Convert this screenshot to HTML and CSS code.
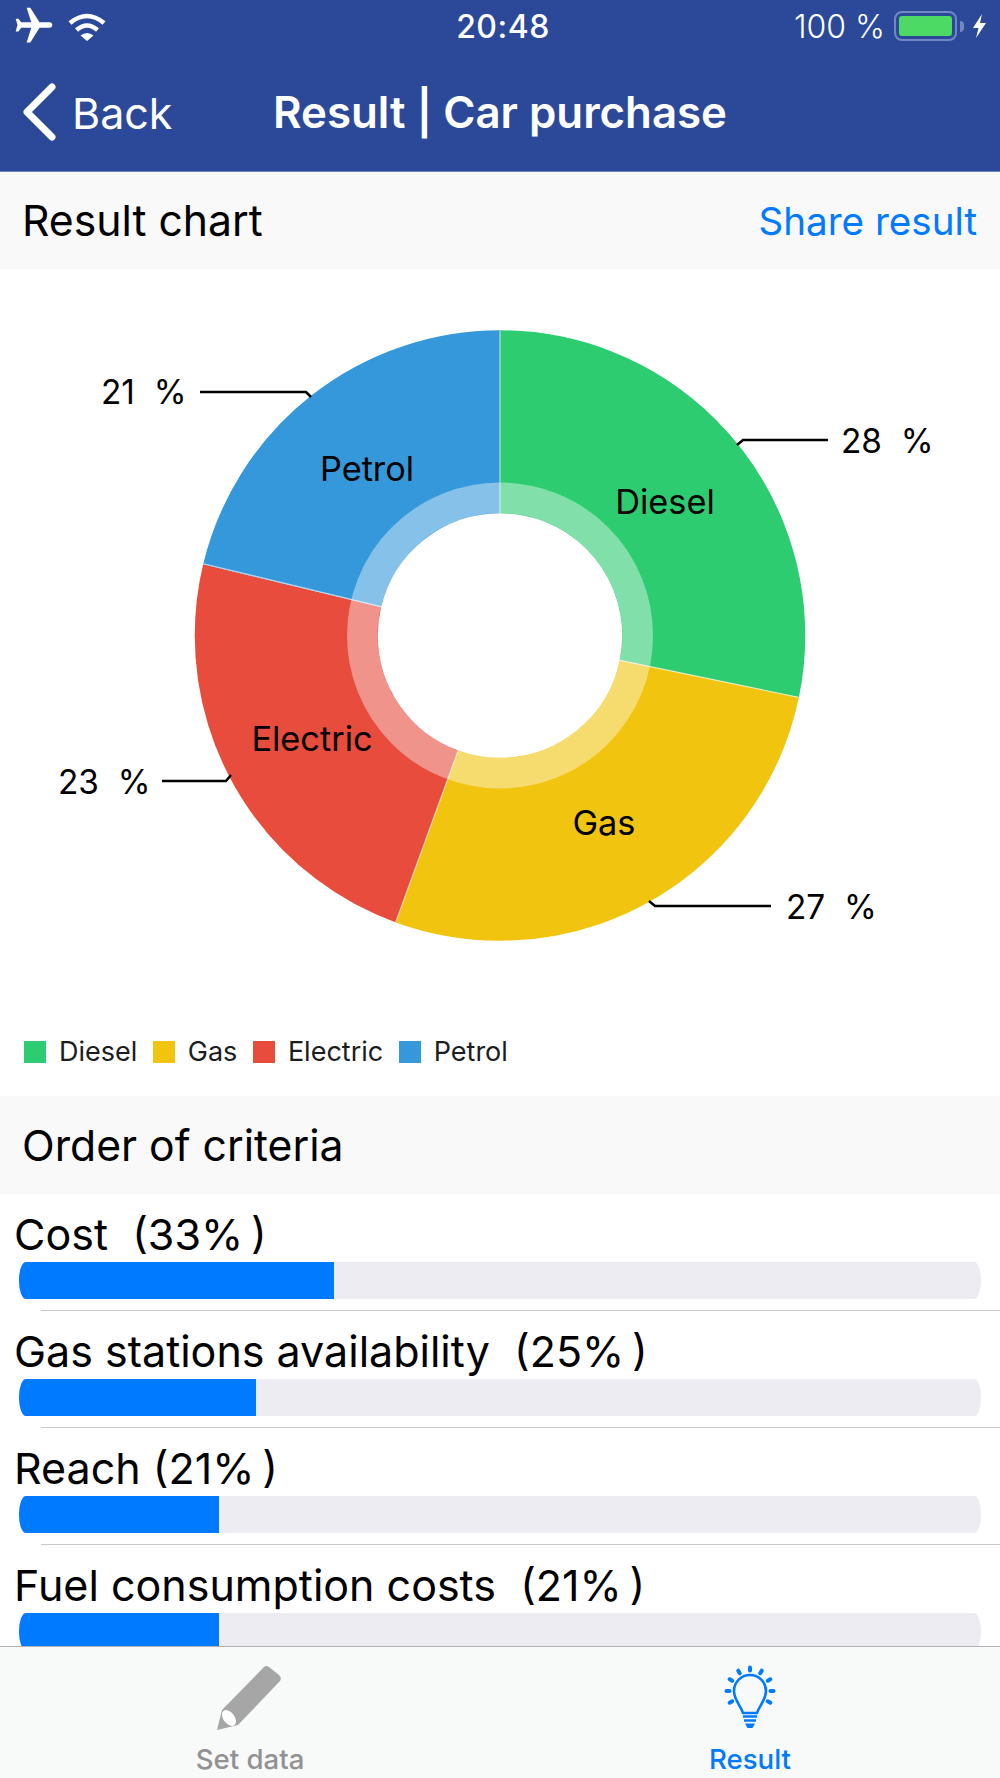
FILE: index.html
```html
<!DOCTYPE html>
<html lang="en">
<head>
    <meta charset="UTF-8">
    <title>Result | Car purchase</title>
    <link rel="stylesheet" href="styles.css">
</head>
<body>
    <div class="app">
        <header class="topbar">
            <div class="status">
                <div class="status-left">
                    <svg class="plane" viewBox="0 0 24 24"><path transform="rotate(90 12 12)" d="M21 16v-2l-8-5V3.5c0-.83-.67-1.5-1.5-1.5S10 2.67 10 3.5V9l-8 5v2l8-2.5V19l-2 1.5V22l3.5-1 3.5 1v-1.5L13 19v-5.5l8 2.5z"/></svg>
                    <svg class="wifi" viewBox="0 0 38 29">
                        <path class="wifi-arc" d="M2 11Q19-3 36 11"/>
                        <path class="wifi-arc" d="M8.5 18Q19 9 29.5 18"/>
                        <path d="M12.5 23.500Q19 18.500 25.500 23.500L19 29Z"/>
                    </svg>
                </div>
                <div class="clock">20:48</div>
                <div class="status-right">
                    <span class="percent">100 %</span>
                    <div class="battery"><div class="battery-level"></div></div>
                    <div class="battery-nub"></div>
                    <svg class="bolt" viewBox="0 0 15 24"><path d="M10 0L1 14H6.500L4 24L14 9H8Z"/></svg>
                </div>
            </div>
            <nav class="navbar">
                <a class="back">
                    <svg class="chevron" viewBox="0 0 36 58"><path d="M30 4L5 29L30 54"/></svg>
                    <span>Back</span>
                </a>
                <div class="title">Result | Car purchase</div>
                <div></div>
            </nav>
        </header>

        <main class="content">
            <div class="section-head">
                <span>Result chart</span>
                <a class="share">Share result</a>
            </div>

            <section class="chart">
                <svg class="donut" viewBox="0 269 1000 750">
                    <g class="ring" transform="rotate(-90 500 635.5)">
                        <circle class="slice green" cx="500" cy="635.5" r="213.75" pathLength="100" stroke-dasharray="28.25 71.75"/>
                        <circle class="slice yellow" cx="500" cy="635.5" r="213.75" pathLength="100" stroke-dasharray="27.3 72.7" stroke-dashoffset="-28.25"/>
                        <circle class="slice red" cx="500" cy="635.5" r="213.75" pathLength="100" stroke-dasharray="23.2 76.8" stroke-dashoffset="-55.55"/>
                        <circle class="slice blue" cx="500" cy="635.5" r="213.75" pathLength="100" stroke-dasharray="21.25 78.75" stroke-dashoffset="-78.75"/>
                        <circle class="shade" cx="500" cy="635.5" r="137.75"/>
                    </g>
                    <line class="gap" x1="500" y1="513" x2="500" y2="330.5"/>
                    <line class="gap" x1="500" y1="513" x2="500" y2="330.5" transform="rotate(101.7 500 635.5)"/>
                    <line class="gap" x1="500" y1="513" x2="500" y2="330.5" transform="rotate(200 500 635.5)"/>
                    <line class="gap" x1="500" y1="513" x2="500" y2="330.5" transform="rotate(283.6 500 635.5)"/>

                    <path class="leader" d="M200 392H306L311 397"/>
                    <path class="leader" d="M828 440H743L737 445"/>
                    <path class="leader" d="M771 906H655L649 901"/>
                    <path class="leader" d="M162 781H226L231 775"/>

                    <text class="value" x="101" y="404">21&#160;&#160;%</text>
                    <text class="value" x="841" y="453">28&#160;&#160;%</text>
                    <text class="value" x="786" y="919">27&#160;&#160;%</text>
                    <text class="value" x="58" y="794">23&#160;&#160;%</text>

                    <text class="name" x="367" y="481">Petrol</text>
                    <text class="name" x="665" y="514">Diesel</text>
                    <text class="name" x="312" y="751">Electric</text>
                    <text class="name" x="604" y="835">Gas</text>
                </svg>
                <div class="legend">
                    <div class="legend-item"><i class="swatch bg-green"></i>Diesel</div>
                    <div class="legend-item"><i class="swatch bg-yellow"></i>Gas</div>
                    <div class="legend-item"><i class="swatch bg-red"></i>Electric</div>
                    <div class="legend-item"><i class="swatch bg-blue"></i>Petrol</div>
                </div>
            </section>

            <div class="section-head">
                <span>Order of criteria</span>
            </div>

            <div class="criteria">
                <div class="row">
                    <div class="row-label">Cost&#160; (33%&#8201;)</div>
                    <div class="track"><div class="fill" style="width: 32.7%"></div></div>
                </div>
                <div class="row">
                    <div class="row-label">Gas stations availability&#160; (25%&#8201;)</div>
                    <div class="track"><div class="fill" style="width: 24.6%"></div></div>
                </div>
                <div class="row">
                    <div class="row-label">Reach (21%&#8201;)</div>
                    <div class="track"><div class="fill" style="width: 20.8%"></div></div>
                </div>
                <div class="row">
                    <div class="row-label">Fuel consumption costs&#160; (21%&#8201;)</div>
                    <div class="track"><div class="fill" style="width: 20.8%"></div></div>
                </div>
            </div>
        </main>

        <footer class="tabbar">
            <a class="tab">
                <svg class="tab-icon" viewBox="0 0 68 68">
                    <path class="pencil" d="M1 66L6 46L48 3Q50 1 53 3L63 11Q66 14 64 17L22 61Z"/>
                    <ellipse class="pencil-tip" cx="13" cy="54" rx="5.500" ry="9" transform="rotate(-38 13 54)"/>
                </svg>
                <span>Set data</span>
            </a>
            <a class="tab active">
                <svg class="tab-icon" viewBox="0 0 68 68">
                    <g class="bulb">
                        <path d="M27 49C25 42 18 36 18 27A16 16 0 0 1 50 27C50 36 43 42 41 49Z"/>
                        <path d="M27 52.500H41M28 56.500H40"/>
                    </g>
                    <path class="bulb-foot" d="M29 59.500H39L36.500 64H31.500Z"/>
                    <g class="rays">
                        <line x1="34" y1="3.500" x2="34" y2="6.500"/>
                        <line x1="34" y1="3.500" x2="34" y2="6.500" transform="rotate(30 34 27)"/>
                        <line x1="34" y1="3.500" x2="34" y2="6.500" transform="rotate(60 34 27)"/>
                        <line x1="34" y1="3.500" x2="34" y2="6.500" transform="rotate(90 34 27)"/>
                        <line x1="34" y1="3.500" x2="34" y2="6.500" transform="rotate(120 34 27)"/>
                        <line x1="34" y1="3.500" x2="34" y2="6.500" transform="rotate(-30 34 27)"/>
                        <line x1="34" y1="3.500" x2="34" y2="6.500" transform="rotate(-60 34 27)"/>
                        <line x1="34" y1="3.500" x2="34" y2="6.500" transform="rotate(-90 34 27)"/>
                        <line x1="34" y1="3.500" x2="34" y2="6.500" transform="rotate(-120 34 27)"/>
                    </g>
                </svg>
                <span>Result</span>
            </a>
        </footer>
    </div>
</body>
</html>
```

FILE: styles.css
```css
* {
    box-sizing: border-box;
}
body {
    margin: 0;
    font-family: 'Inter', 'Liberation Sans', sans-serif;
    color: #000;
    background: #fff;
}
.app {
    display: flex;
    flex-direction: column;
    height: 100vh;
    overflow: hidden;
}

/* top bar */
.topbar {
    flex: none;
    height: 172px;
    background-color: #2c4999;
    border-bottom: 1px solid #6f84bb;
    color: #fff;
}
.status {
    display: grid;
    grid-template-columns: 1fr auto 1fr;
    align-items: center;
    height: 52px;
    padding: 0 13px 0 16px;
}
.status-left {
    display: flex;
    align-items: center;
    gap: 15px;
}
.plane {
    width: 44px;
    height: 44px;
    margin: 0 -3px 0 -4px;
    fill: #fff;
}
.wifi {
    width: 38px;
    height: 29px;
    fill: #fff;
}
.wifi-arc {
    fill: none;
    stroke: #fff;
    stroke-width: 4.5;
}
.clock {
    font-size: 32px;
    font-weight: 500;
    letter-spacing: 0.5px;
    margin-left: 3px;
}
.status-right {
    display: flex;
    align-items: center;
    justify-content: flex-end;
}
.percent {
    font-size: 32px;
    font-weight: 300;
    margin-right: 9px;
}
.battery {
    width: 63px;
    height: 30px;
    padding: 3px;
    border: 2px solid #7287c2;
    border-radius: 8px;
}
.battery-level {
    height: 100%;
    background-color: #4cd964;
    border-radius: 3px;
}
.battery-nub {
    width: 4px;
    height: 11px;
    margin: 0 8px 0 3px;
    background-color: #7287c2;
    border-radius: 0 4px 4px 0;
}
.bolt {
    width: 15px;
    height: 24px;
    fill: #fff;
}
.navbar {
    display: grid;
    grid-template-columns: 1fr auto 1fr;
    align-items: center;
    height: 119px;
    padding: 2px 22px 0;
}
.back {
    display: flex;
    align-items: center;
    gap: 14px;
    font-size: 43px;
    font-weight: 400;
}
.chevron {
    width: 36px;
    height: 58px;
    margin-top: -2px;
    fill: none;
    stroke: #fff;
    stroke-width: 7;
    stroke-linecap: round;
    stroke-linejoin: round;
}
.title {
    font-size: 43.8px;
    font-weight: 600;
}

/* sections */
.content {
    flex: 1;
    min-height: 0;
    overflow: hidden;
}
.section-head {
    display: flex;
    justify-content: space-between;
    align-items: center;
    height: 97px;
    padding: 0 23px 0 22px;
    background-color: #f9f9f9;
    font-size: 42.7px;
}
.chart + .section-head {
    height: 98px;
}
.share {
    color: #007aff;
    font-size: 38.6px;
}

/* donut chart */
.chart {
    height: 827px;
}
.donut {
    display: block;
    width: 1000px;
    height: 750px;
}
.slice {
    fill: none;
    stroke-width: 183;
}
.green { stroke: #2ecc71; }
.yellow { stroke: #f1c40f; }
.red { stroke: #e74c3c; }
.blue { stroke: #3498db; }
.shade {
    fill: none;
    stroke: #fff;
    stroke-opacity: 0.4;
    stroke-width: 30.5;
}
.gap {
    stroke: #fff;
    stroke-opacity: 0.6;
    stroke-width: 1.2;
}
.leader {
    fill: none;
    stroke: #000;
    stroke-width: 2.5;
}
.value {
    font-size: 33.4px;
}
.name {
    font-size: 34.3px;
    text-anchor: middle;
}
.legend {
    display: flex;
    gap: 15.5px;
    padding: 18px 0 0 24px;
    font-size: 27px;
    line-height: 30px;
    color: #1c1c1e;
}
.legend-item {
    display: flex;
    align-items: center;
    gap: 13px;
}
.swatch {
    width: 22px;
    height: 22px;
}
.bg-green { background-color: #2ecc71; }
.bg-yellow { background-color: #f1c40f; }
.bg-red { background-color: #e74c3c; }
.bg-blue { background-color: #3498db; }

/* criteria list */
.row {
    height: 117px;
    padding: 13px 19px 0 14px;
    position: relative;
}
.row + .row::before {
    content: "";
    position: absolute;
    top: -1px;
    left: 41px;
    right: 0;
    height: 1px;
    background-color: #c8c7cc;
}
.row-label {
    font-size: 43px;
    line-height: 55px;
}
.track {
    height: 37px;
    margin: 0 0 0 5px;
    overflow: hidden;
    background-color: #edecf2;
    border-radius: 7px / 18px;
}
.fill {
    height: 100%;
    background-color: #007aff;
}

/* tab bar */
.tabbar {
    flex: none;
    display: grid;
    grid-template-columns: 1fr 1fr;
    height: 132px;
    background-color: #f8f9f9;
    border-top: 1px solid #b2b2b2;
}
.tab {
    display: flex;
    flex-direction: column;
    align-items: center;
    padding-top: 17px;
    color: #929292;
    font-size: 27.6px;
    font-weight: 500;
}
.tab.active {
    color: #007aff;
}
.tab-icon {
    width: 68px;
    height: 68px;
    margin-bottom: 10px;
}
.pencil {
    fill: #a6a6a6;
}
.pencil-tip {
    fill: #fff;
}
.bulb {
    fill: none;
    stroke: #007aff;
    stroke-width: 2.6;
}
.bulb-foot {
    fill: #007aff;
}
.rays line {
    stroke: #007aff;
    stroke-width: 4;
    stroke-linecap: round;
}
```
